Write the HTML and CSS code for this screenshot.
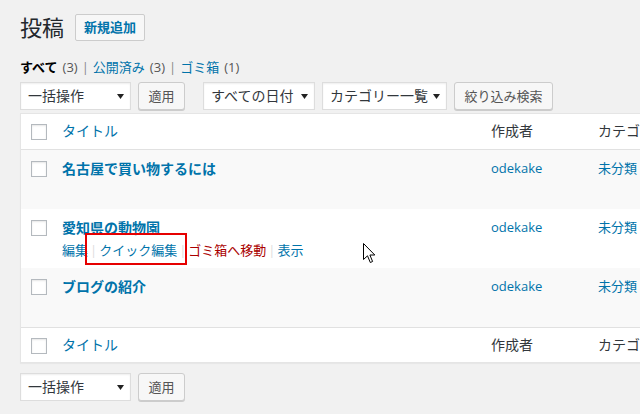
FILE: index.html
```html
<!DOCTYPE html>
<html lang="ja">
<head>
<meta charset="utf-8">
<title>投稿</title>
<link rel="stylesheet" href="styles.css">
</head>
<body>
<div class="wrap">
  <div class="page-head">
    <h1 class="page-title">投稿</h1>
    <a class="add-new" href="#">新規追加</a>
  </div>

  <ul class="subsubsub">
    <li><a class="current" href="#">すべて</a><span class="count">(3)</span></li>
    <li class="sep">|</li>
    <li><a href="#">公開済み</a><span class="count">(3)</span></li>
    <li class="sep">|</li>
    <li><a href="#">ゴミ箱</a><span class="count">(1)</span></li>
  </ul>

  <div class="tablenav top">
    <div class="select w-bulk"><span>一括操作</span><svg class="arrow" width="7" height="5" viewBox="0 0 7 5"><path d="M0 0H7L3.5 5Z" fill="#222"/></svg></div>
    <button class="button apply">適用</button>
    <div class="select w-date"><span>すべての日付</span><svg class="arrow" width="7" height="5" viewBox="0 0 7 5"><path d="M0 0H7L3.5 5Z" fill="#222"/></svg></div>
    <div class="select w-cat"><span>カテゴリー一覧</span><svg class="arrow" width="7" height="5" viewBox="0 0 7 5"><path d="M0 0H7L3.5 5Z" fill="#222"/></svg></div>
    <button class="button filter">絞り込み検索</button>
  </div>

  <div class="list">
    <div class="row head">
      <div class="cell check"><span class="cb"></span></div>
      <div class="cell title"><a class="col-link" href="#">タイトル</a></div>
      <div class="cell author">作成者</div>
      <div class="cell cat">カテゴリー</div>
    </div>

    <div class="row post alt">
      <div class="cell check"><span class="cb"></span></div>
      <div class="cell title"><a class="row-title" href="#">名古屋で買い物するには</a></div>
      <div class="cell author"><a href="#">odekake</a></div>
      <div class="cell cat"><a href="#">未分類</a></div>
    </div>

    <div class="row post">
      <div class="cell check"><span class="cb"></span></div>
      <div class="cell title">
        <a class="row-title" href="#">愛知県の動物園</a>
        <div class="row-actions">
          <a href="#">編集</a><span class="rsep">|</span><a href="#">クイック編集</a><span class="rsep">|</span><a class="trash" href="#">ゴミ箱へ移動</a><span class="rsep">|</span><a href="#">表示</a>
          <span class="callout"></span>
        </div>
      </div>
      <div class="cell author"><a href="#">odekake</a></div>
      <div class="cell cat"><a href="#">未分類</a></div>
    </div>

    <div class="row post alt">
      <div class="cell check"><span class="cb"></span></div>
      <div class="cell title"><a class="row-title" href="#">ブログの紹介</a></div>
      <div class="cell author"><a href="#">odekake</a></div>
      <div class="cell cat"><a href="#">未分類</a></div>
    </div>

    <div class="row foot">
      <div class="cell check"><span class="cb"></span></div>
      <div class="cell title"><a class="col-link" href="#">タイトル</a></div>
      <div class="cell author">作成者</div>
      <div class="cell cat">カテゴリー</div>
    </div>
  </div>

  <div class="tablenav bottom">
    <div class="select w-bulk"><span>一括操作</span><svg class="arrow" width="7" height="5" viewBox="0 0 7 5"><path d="M0 0H7L3.5 5Z" fill="#222"/></svg></div>
    <button class="button apply">適用</button>
  </div>
</div>

<svg class="cursor" width="14" height="22" viewBox="0 0 14 22">
  <path d="M0.5 0.5 L0.5 16.5 L4.5 12.8 L7.3 19.5 L9.6 18.5 L6.9 12 L11.8 12 Z" fill="#fff" stroke="#000" stroke-width="1" stroke-linejoin="miter"/>
</svg>
</body>
</html>
```

FILE: styles.css
```css
html, body {
  margin: 0;
  padding: 0;
}
body {
  background: #f1f1f1;
  font-family: "Open Sans", "Noto Sans CJK JP", sans-serif;
  font-size: 13px;
  color: #444;
  overflow: hidden;
  width: 640px;
  height: 414px;
  position: relative;
}
a {
  color: #0073aa;
  text-decoration: none;
}
.wrap {
  padding-left: 20px;
}

/* heading */
.page-head {
  display: flex;
  align-items: center;
  padding-top: 14px;
  height: 27px;
}
.page-title {
  margin: 0;
  font-size: 22px;
  font-weight: 400;
  line-height: 27px;
  color: #23282d;
}
.add-new {
  margin-left: 11px;
  height: 25px;
  line-height: 25px;
  padding: 0 8px;
  border: 1px solid #ccc;
  border-radius: 2px;
  background: #f7f7f7;
  font-size: 13px;
  font-weight: 700;
  color: #0073aa;
}

/* status links */
.subsubsub {
  list-style: none;
  margin: 16px 0 0;
  padding: 0;
  display: flex;
  line-height: 20px;
  font-size: 13px;
  color: #666;
}
.subsubsub .current {
  color: #000;
  font-weight: 700;
}
.subsubsub .count {
  margin-left: 5px;
  color: #555;
}
.subsubsub .sep {
  margin: 0 4px;
  color: #888;
}

/* toolbar */
.tablenav {
  display: flex;
  align-items: center;
  height: 28px;
}
.tablenav.top {
  margin-top: 5px;
}
.tablenav.bottom {
  margin-top: 10px;
}
.select {
  box-sizing: border-box;
  height: 28px;
  border: 1px solid #ddd;
  background: #fff;
  box-shadow: inset 0 1px 2px rgba(0, 0, 0, 0.07);
  display: flex;
  align-items: center;
  justify-content: space-between;
  padding: 0 6px 0 7px;
  font-size: 14px;
  color: #32373c;
  line-height: 20px;
  white-space: nowrap;
}
.select .arrow {
  display: block;
  flex: none;
}
.w-bulk {
  width: 111px;
}
.w-date {
  width: 112px;
  margin-left: 18px;
}
.w-cat {
  width: 125px;
  margin-left: 7px;
}
.button {
  box-sizing: border-box;
  height: 28px;
  padding: 0;
  border: 1px solid #ccc;
  border-radius: 3px;
  background: #f7f7f7;
  box-shadow: 0 1px 0 #ccc;
  font-family: inherit;
  font-size: 13px;
  color: #555;
  line-height: 26px;
  white-space: nowrap;
  text-align: center;
}
.apply {
  margin-left: 7px;
  width: 47px;
}
.filter {
  margin-left: 7px;
  width: 99px;
}

/* list table */
.list {
  margin-top: 3px;
  width: 760px;
  background: #fff;
  border: 1px solid #e5e5e5;
  box-shadow: 0 1px 1px rgba(0, 0, 0, 0.04);
}
.row {
  display: grid;
  grid-template-columns: 31px 429px 107px 1fr;
}
.row.head {
  height: 35px;
  border-bottom: 1px solid #e1e1e1;
}
.row.foot {
  height: 34px;
  border-top: 1px solid #e1e1e1;
}
.row.post {
  height: 59px;
}
.row.alt {
  background: #f9f9f9;
}
.cell {
  padding: 8px 10px;
  box-sizing: border-box;
  line-height: 19px;
  min-width: 0;
}
.row.head .cell,
.row.foot .cell {
  font-size: 14px;
  color: #32373c;
  line-height: 20px;
  padding-top: 7px;
}
.cell.check {
  padding: 11px 0 0 10px;
}
.row.head .cell.check,
.row.foot .cell.check {
  padding: 10px 0 0 10px;
}
.cb {
  display: block;
  box-sizing: border-box;
  width: 16px;
  height: 16px;
  border: 1px solid #b4b9be;
  background: #fff;
  box-shadow: inset 0 1px 2px rgba(0, 0, 0, 0.1);
}
.cell.cat {
  white-space: nowrap;
}
.row-title {
  display: block;
  font-size: 14px;
  font-weight: 700;
  line-height: 21px;
}
.cell.author,
.cell.cat {
  padding-top: 9px;
}
.row-actions {
  position: relative;
  padding-top: 3px;
  font-size: 13px;
  line-height: 19px;
  white-space: nowrap;
}
.rsep {
  margin: 0 2px;
  color: #ddd;
}
.trash {
  color: #a00;
}
.callout {
  position: absolute;
  left: 23px;
  top: -5px;
  width: 102px;
  height: 32px;
  box-sizing: border-box;
  border: 2px solid #e60000;
}

/* mouse pointer */
.cursor {
  position: absolute;
  left: 363px;
  top: 243px;
}
```
